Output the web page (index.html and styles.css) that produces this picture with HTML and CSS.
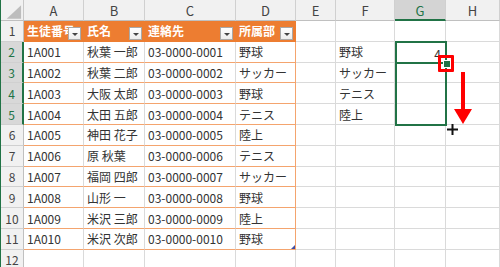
FILE: index.html
```html
<!DOCTYPE html>
<html lang="ja">
<head>
<meta charset="utf-8">
<link rel="stylesheet" href="styles.css">
</head>
<body>
<div class="sheet">
  <div class="cell corner"><svg class="tri" width="23" height="21" viewBox="0 0 23 21"><polygon points="6,19 21,19 21,5" fill="#BDBDBD"/></svg></div>
  <div class="cell ch">A</div><div class="cell ch">B</div><div class="cell ch">C</div><div class="cell ch">D</div><div class="cell ch">E</div><div class="cell ch">F</div><div class="cell ch sel">G</div><div class="cell ch">H</div>

  <div class="cell rh">1</div>
  <div class="cell th">生徒番号<span class="fb"></span></div>
  <div class="cell th">氏名<span class="fb"></span></div>
  <div class="cell th">連絡先<span class="fb"></span></div>
  <div class="cell th">所属部<span class="fb"></span></div>
  <div class="cell"></div><div class="cell"></div><div class="cell"></div><div class="cell"></div>

  <div class="cell rh sel">2</div>
  <div class="cell td">1A001</div><div class="cell td">秋葉 一郎</div><div class="cell td">03-0000-0001</div><div class="cell td last">野球</div>
  <div class="cell"></div><div class="cell">野球</div><div class="cell num">4</div><div class="cell"></div>

  <div class="cell rh sel">3</div>
  <div class="cell td">1A002</div><div class="cell td">秋葉 二郎</div><div class="cell td">03-0000-0002</div><div class="cell td last">サッカー</div>
  <div class="cell"></div><div class="cell">サッカー</div><div class="cell"></div><div class="cell"></div>

  <div class="cell rh sel">4</div>
  <div class="cell td">1A003</div><div class="cell td">大阪 太郎</div><div class="cell td">03-0000-0003</div><div class="cell td last">野球</div>
  <div class="cell"></div><div class="cell">テニス</div><div class="cell"></div><div class="cell"></div>

  <div class="cell rh sel">5</div>
  <div class="cell td">1A004</div><div class="cell td">太田 五郎</div><div class="cell td">03-0000-0004</div><div class="cell td last">テニス</div>
  <div class="cell"></div><div class="cell">陸上</div><div class="cell"></div><div class="cell"></div>

  <div class="cell rh">6</div>
  <div class="cell td">1A005</div><div class="cell td">神田 花子</div><div class="cell td">03-0000-0005</div><div class="cell td last">陸上</div>
  <div class="cell"></div><div class="cell"></div><div class="cell"></div><div class="cell"></div>

  <div class="cell rh">7</div>
  <div class="cell td">1A006</div><div class="cell td">原 秋葉</div><div class="cell td">03-0000-0006</div><div class="cell td last">テニス</div>
  <div class="cell"></div><div class="cell"></div><div class="cell"></div><div class="cell"></div>

  <div class="cell rh">8</div>
  <div class="cell td">1A007</div><div class="cell td">福岡 四郎</div><div class="cell td">03-0000-0007</div><div class="cell td last">サッカー</div>
  <div class="cell"></div><div class="cell"></div><div class="cell"></div><div class="cell"></div>

  <div class="cell rh">9</div>
  <div class="cell td">1A008</div><div class="cell td">山形 一</div><div class="cell td">03-0000-0008</div><div class="cell td last">野球</div>
  <div class="cell"></div><div class="cell"></div><div class="cell"></div><div class="cell"></div>

  <div class="cell rh">10</div>
  <div class="cell td">1A009</div><div class="cell td">米沢 三郎</div><div class="cell td">03-0000-0009</div><div class="cell td last">陸上</div>
  <div class="cell"></div><div class="cell"></div><div class="cell"></div><div class="cell"></div>

  <div class="cell rh">11</div>
  <div class="cell td">1A010</div><div class="cell td">米沢 次郎</div><div class="cell td">03-0000-0010</div><div class="cell td last end">野球<span class="grip"></span></div>
  <div class="cell"></div><div class="cell"></div><div class="cell"></div><div class="cell"></div>

  <div class="cell rh">12</div>
  <div class="cell"></div><div class="cell"></div><div class="cell"></div><div class="cell"></div>
  <div class="cell"></div><div class="cell"></div><div class="cell"></div><div class="cell"></div>

  <div class="selection"></div>
  <div class="inner-line"></div>
  <div class="handle"></div>
  <div class="redbox"></div>
  <svg class="arrow" width="20" height="54" viewBox="0 0 20 54"><rect x="8" y="0" width="4" height="39" fill="#FF0000"/><polygon points="1,37 19,37 10,52" fill="#FF0000"/></svg>
  <svg class="plus" width="11" height="11" viewBox="0 0 11 11"><rect x="4.5" y="0" width="2" height="11" fill="#111"/><rect x="0" y="4.5" width="11" height="2" fill="#111"/></svg>
</div>
</body>
</html>
```

FILE: styles.css
```css
html, body {
  margin: 0;
  padding: 0;
}

body {
  width: 500px;
  height: 267px;
  overflow: hidden;
  background: #ffffff;
  font-family: "Noto Sans CJK JP", "Noto Sans", sans-serif;
}

.sheet {
  position: relative;
  display: grid;
  grid-template-columns: 23px 60px 61px 91px 60px 40px 59px 51px 54px;
  grid-template-rows: 21px repeat(12, 20.8px);
  border-left: 1px solid #217346;
}

.cell {
  box-sizing: border-box;
  display: flex;
  align-items: center;
  padding: 0 3px;
  border-right: 1px solid #DADADA;
  border-bottom: 1px solid #DADADA;
  font-size: 12px;
  color: #333333;
  white-space: nowrap;
  overflow: hidden;
}

.corner {
  background: #F1F1F1;
  padding: 0;
  border-right-color: #C8C8C8;
  border-bottom-color: #C0C0C0;
}

.tri {
  display: block;
}

.ch {
  justify-content: center;
  background: #F1F1F1;
  color: #444444;
  font-size: 13px;
  padding-top: 1px;
  border-right-color: #D0D0D0;
  border-bottom-color: #C0C0C0;
}

.ch.sel {
  background: #D4D4D4;
  color: #217346;
  border-bottom: 2px solid #217346;
}

.rh {
  justify-content: center;
  background: #F1F1F1;
  color: #444444;
  padding: 0;
  border-right-color: #C0C0C0;
  border-bottom-color: #D0D0D0;
}

.rh.sel {
  background: #D8D8D8;
  color: #217346;
  border-right: 2px solid #217346;
}

.th {
  position: relative;
  background: #ED7D31;
  color: #ffffff;
  font-weight: bold;
  border-right-color: #ED7D31;
  border-bottom-color: #ED7D31;
}

.fb {
  position: absolute;
  right: 2px;
  top: 6px;
  width: 13px;
  height: 13px;
  box-sizing: border-box;
  border: 1px solid #A9A9A9;
  background: linear-gradient(#FFFFFF, #ECECEC);
  display: flex;
  align-items: center;
  justify-content: center;
}

.fb::after {
  content: "";
  display: block;
  margin-top: 1px;
  border-left: 3px solid transparent;
  border-right: 3px solid transparent;
  border-top: 3px solid #444444;
}

.td {
  border-bottom-color: #F4A46E;
}

.td.last {
  border-right-color: #F4A46E;
}

.end {
  position: relative;
}

.grip {
  position: absolute;
  right: 0;
  bottom: 0;
  width: 0;
  height: 0;
  border-left: 4px solid transparent;
  border-bottom: 4px solid #3E4FA6;
}

.num {
  justify-content: flex-end;
  padding-top: 4px;
  padding-right: 4px;
}

.selection {
  position: absolute;
  left: 394px;
  top: 41px;
  width: 52px;
  height: 85px;
  box-sizing: border-box;
  border: 2px solid #217346;
}

.inner-line {
  position: absolute;
  left: 394px;
  top: 62px;
  width: 52px;
  height: 2px;
  background: #217346;
}

.handle {
  position: absolute;
  left: 442px;
  top: 60px;
  width: 6px;
  height: 6px;
  background: #217346;
  border: 1px solid #ffffff;
}

.redbox {
  position: absolute;
  left: 437px;
  top: 55px;
  width: 16px;
  height: 17px;
  box-sizing: border-box;
  border: 3px solid #FF0000;
  border-radius: 1px;
}

.arrow {
  position: absolute;
  left: 452px;
  top: 72px;
}

.plus {
  position: absolute;
  left: 446px;
  top: 124px;
}
```
